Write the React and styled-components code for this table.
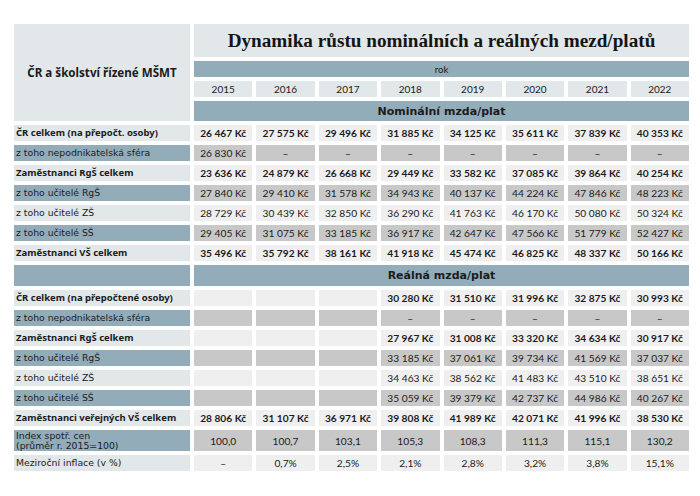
import React from 'react';
import styled, { createGlobalStyle } from 'styled-components';

const GlobalStyle = createGlobalStyle`
  html, body {
    margin: 0;
    padding: 0;
    background: #ffffff;
  }
  body {
    font-family: 'Lato', 'Noto Sans', sans-serif;
    color: #1b1b1b;
  }
`;

const YEARS = ['2015', '2016', '2017', '2018', '2019', '2020', '2021', '2022'];

const nominal = [
  { label: 'ČR celkem (na přepočt. osoby)', bold: true, values: ['26 467 Kč', '27 575 Kč', '29 496 Kč', '31 885 Kč', '34 125 Kč', '35 611 Kč', '37 839 Kč', '40 353 Kč'] },
  { label: 'z toho nepodnikatelská sféra', dark: true, values: ['26 830 Kč', '–', '–', '–', '–', '–', '–', '–'] },
  { label: 'Zaměstnanci RgŠ celkem', bold: true, values: ['23 636 Kč', '24 879 Kč', '26 668 Kč', '29 449 Kč', '33 582 Kč', '37 085 Kč', '39 864 Kč', '40 254 Kč'] },
  { label: 'z toho učitelé RgŠ', dark: true, values: ['27 840 Kč', '29 410 Kč', '31 578 Kč', '34 943 Kč', '40 137 Kč', '44 224 Kč', '47 846 Kč', '48 223 Kč'] },
  { label: 'z toho učitelé ZŠ', values: ['28 729 Kč', '30 439 Kč', '32 850 Kč', '36 290 Kč', '41 763 Kč', '46 170 Kč', '50 080 Kč', '50 324 Kč'] },
  { label: 'z toho učitelé SŠ', dark: true, values: ['29 405 Kč', '31 075 Kč', '33 185 Kč', '36 917 Kč', '42 647 Kč', '47 566 Kč', '51 779 Kč', '52 427 Kč'] },
  { label: 'Zaměstnanci VŠ celkem', bold: true, values: ['35 496 Kč', '35 792 Kč', '38 161 Kč', '41 918 Kč', '45 474 Kč', '46 825 Kč', '48 337 Kč', '50 166 Kč'] },
];

const real = [
  { label: 'ČR celkem (na přepočtené osoby)', bold: true, values: ['', '', '', '30 280 Kč', '31 510 Kč', '31 996 Kč', '32 875 Kč', '30 993 Kč'] },
  { label: 'z toho nepodnikatelská sféra', dark: true, values: ['', '', '', '–', '–', '–', '–', '–'] },
  { label: 'Zaměstnanci RgŠ celkem', bold: true, values: ['', '', '', '27 967 Kč', '31 008 Kč', '33 320 Kč', '34 634 Kč', '30 917 Kč'] },
  { label: 'z toho učitelé RgŠ', dark: true, values: ['', '', '', '33 185 Kč', '37 061 Kč', '39 734 Kč', '41 569 Kč', '37 037 Kč'] },
  { label: 'z toho učitelé ZŠ', values: ['', '', '', '34 463 Kč', '38 562 Kč', '41 483 Kč', '43 510 Kč', '38 651 Kč'] },
  { label: 'z toho učitelé SŠ', dark: true, values: ['', '', '', '35 059 Kč', '39 379 Kč', '42 737 Kč', '44 986 Kč', '40 267 Kč'] },
  { label: 'Zaměstnanci veřejných VŠ celkem', bold: true, values: ['28 806 Kč', '31 107 Kč', '36 971 Kč', '39 808 Kč', '41 989 Kč', '42 071 Kč', '41 996 Kč', '38 530 Kč'] },
  { label: 'Index spotř. cen\n(průměr r. 2015=100)', dark: true, tall: true, values: ['100,0', '100,7', '103,1', '105,3', '108,3', '111,3', '115,1', '130,2'] },
  { label: 'Meziroční inflace (v %)', values: ['–', '0,7%', '2,5%', '2,1%', '2,8%', '3,2%', '3,8%', '15,1%'] },
];

const Page = styled.div`
  padding: 24px 11px 24px 14px;
`;

const Table = styled.div`
  display: grid;
  width: 675px;
  grid-template-columns: 176px repeat(8, 1fr);
  gap: 4px 4px;
`;

const Corner = styled.div`
  grid-column: 1;
  grid-row: 1 / span 4;
  background: #e2e7ea;
  display: flex;
  align-items: center;
  justify-content: center;
  font-family: 'Noto Sans', 'DejaVu Sans', sans-serif;
  font-weight: 700;
  font-size: 11.6px;
`;

const Title = styled.div`
  grid-column: 2 / -1;
  background: #e2e7ea;
  display: flex;
  align-items: center;
  justify-content: center;
  font-family: 'Liberation Serif', 'DejaVu Serif', serif;
  font-weight: 700;
  font-size: 19.2px;
  color: #151515;
`;

const Band = styled.div`
  grid-column: ${(p) => p.$span || '2 / -1'};
  background: #93acba;
  display: flex;
  align-items: center;
  justify-content: center;
  font-family: ${(p) => (p.$big ? "'DejaVu Sans', 'Noto Sans', sans-serif" : "'Lato', sans-serif")};
  font-size: ${(p) => (p.$big ? '11px' : '9.5px')};
  font-weight: ${(p) => (p.$big ? 700 : 400)};
  color: #1b1b1b;
`;

const Year = styled.div`
  background: #e2e7ea;
  display: flex;
  align-items: center;
  justify-content: center;
  font-size: 10px;
`;

const Label = styled.div`
  grid-column: 1;
  background: ${(p) => (p.$dark ? '#93acba' : '#e2e7ea')};
  display: flex;
  align-items: center;
  padding-left: 2px;
  font-family: ${(p) => (p.$bold ? "'Noto Sans', 'DejaVu Sans', sans-serif" : "'DejaVu Sans', 'Noto Sans', sans-serif")};
  font-size: ${(p) => (p.$bold ? '9.5px' : '9.3px')};
  font-weight: ${(p) => (p.$bold ? 700 : 400)};
  line-height: 10px;
  white-space: pre-line;
`;

const Value = styled.div`
  background: ${(p) => (p.$dark ? '#c8c8c8' : '#efefef')};
  display: flex;
  align-items: center;
  justify-content: center;
  font-size: 10.2px;
  font-weight: ${(p) => (p.$bold ? 700 : 400)};
  white-space: nowrap;
`;

const Row = ({ row }) => (
  <>
    <Label $dark={row.dark} $bold={row.bold}>
      {row.label}
    </Label>
    {row.values.map((v, i) => (
      <Value key={i} $dark={row.dark} $bold={row.bold}>
        {v}
      </Value>
    ))}
  </>
);

export default function App() {
  const rows = [
    '33px', '16px', '16px', '20px',
    ...nominal.map(() => '16px'),
    '21px',
    ...real.map((r) => (r.tall ? '21px' : '16px')),
  ].join(' ');

  return (
    <>
      <GlobalStyle />
      <Page>
        <Table style={{ gridTemplateRows: rows }}>
          <Corner>ČR a školství řízené MŠMT</Corner>
          <Title>Dynamika růstu nominálních a reálných mezd/platů</Title>
          <Band>rok</Band>
          {YEARS.map((y) => (
            <Year key={y}>{y}</Year>
          ))}
          <Band $big>Nominální mzda/plat</Band>
          {nominal.map((r, i) => (
            <Row key={`n${i}`} row={r} />
          ))}
          <Band $span="1" />
          <Band $big>Reálná mzda/plat</Band>
          {real.map((r, i) => (
            <Row key={`r${i}`} row={r} />
          ))}
        </Table>
      </Page>
    </>
  );
}
